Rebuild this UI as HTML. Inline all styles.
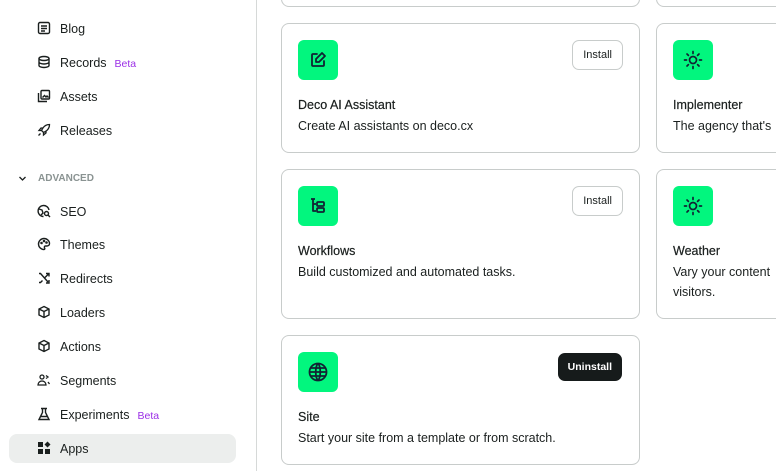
<!DOCTYPE html>
<html><head><style>
*{box-sizing:border-box;margin:0;padding:0}
body{width:776px;height:471px;overflow:hidden;background:#fff;font-family:"Liberation Sans",sans-serif;color:#1a1f1e;position:relative}
.side{position:absolute;left:0;top:0;width:257px;height:471px;border-right:1px solid #d6d9d8}
.item{position:absolute;left:9px;width:227px;height:29px;display:flex;align-items:center;font-size:12.5px}
.item svg{position:absolute;left:28px;top:7px}
.item span.t{position:absolute;left:51px}
.beta{color:#9b2fe6;font-size:10.5px;margin-left:8px}
.sel{background:#eceeed;border-radius:8px}
.card{position:absolute;border:1px solid #c8cccb;border-radius:8px;background:#fff}
.ic{position:absolute;left:16px;top:16px;width:40px;height:40px;border-radius:6px;background:#02f67e;display:flex;align-items:center;justify-content:center}
.ttl{position:absolute;left:16px;top:74px;font-size:12.5px;white-space:nowrap;-webkit-text-stroke:0.2px #1a1f1e}
.desc{position:absolute;left:16px;top:92px;font-size:12.5px;line-height:20px;white-space:nowrap}
.btn{position:absolute;right:16px;top:16px;height:30px;padding:0 10px;border:1px solid #c8cccb;border-radius:7px;font-size:11px;display:flex;align-items:center}
.btn.dark{background:#161b1b;color:#fff;border-color:#161b1b;font-weight:bold;height:28px;top:17px;right:17px;padding:0 9px;font-size:10.5px}
</style></head><body>
<div class="side">
<div class="item" style="top:14px"><svg width="14" height="14" viewBox="0 0 14 14" fill="none" stroke="#1a1f1e" stroke-width="1.4"><rect x="1.5" y="1.5" width="11" height="11" rx="1.5"/><path d="M4 5h6M4 7.5h6M4 10h4"/></svg><span class="t">Blog</span></div>
<div class="item" style="top:48px"><svg width="14" height="14" viewBox="0 0 14 14" fill="none" stroke="#1a1f1e" stroke-width="1.4"><ellipse cx="7" cy="3.5" rx="5" ry="2"/><path d="M2 3.5v7c0 1.1 2.2 2 5 2s5-.9 5-2v-7M2 7c0 1.1 2.2 2 5 2s5-.9 5-2"/></svg><span class="t">Records<span class="beta">Beta</span></span></div>
<div class="item" style="top:82px"><svg width="14" height="14" viewBox="0 0 14 14" fill="none" stroke="#1a1f1e" stroke-width="1.4"><rect x="4" y="1.5" width="8.5" height="8.5" rx="1"/><path d="M1.5 4v8.5H10M5.5 8.5l2-2 1.5 1.5 1-1 1.5 1.5"/></svg><span class="t">Assets</span></div>
<div class="item" style="top:116px"><svg width="14" height="14" viewBox="0 0 14 14" fill="none" stroke="#1a1f1e" stroke-width="1.3"><path d="M12.5 1.5c-4 0-6.5 2.5-8 6l2 2c3.5-1.5 6-4 6-8zM4.5 7.5H2l2-2.5h2.5M6.5 9.5V12l2.5-2V7.5M3.5 10.5l-2 2"/></svg><span class="t">Releases</span></div>
<div style="position:absolute;left:18px;top:173px;font-size:10px;color:#8a9392;font-weight:bold"><svg width="9" height="9" viewBox="0 0 9 9" fill="none" stroke="#1a1f1e" stroke-width="1.3" style="vertical-align:middle"><path d="M1.5 3l3 3 3-3"/></svg><span style="margin-left:11px">ADVANCED</span></div>
<div class="item" style="top:197px"><svg width="14" height="14" viewBox="0 0 14 14" fill="none" stroke="#1a1f1e" stroke-width="1.4"><path d="M12 6A5.5 5.5 0 1 0 6.5 12.5"/><path d="M2 5l3 1 1 3-2 2"/><circle cx="9.5" cy="9.5" r="2"/><path d="M11 11l2 2"/></svg><span class="t">SEO</span></div>
<div class="item" style="top:230px"><svg width="14" height="14" viewBox="0 0 14 14" fill="none" stroke="#1a1f1e" stroke-width="1.4"><path d="M7 1.5a5.5 5.5 0 0 0 0 11c1 0 1-1 .5-1.8-.5-.8 0-1.700 1-1.700h1.5c1.5 0 2.5-1 2.5-2.5 0-2.7-2.5-5-5.5-5z"/><circle cx="4.5" cy="6" r=".6"/><circle cx="7" cy="4" r=".6"/><circle cx="9.5" cy="5.5" r=".6"/></svg><span class="t">Themes</span></div>
<div class="item" style="top:264px"><svg width="14" height="14" viewBox="0 0 14 14" fill="none" stroke="#1a1f1e" stroke-width="1.4"><path d="M2 2.5h1.5L11 11M9 2.5h3v3M12 2.5L8 6.5M2 11.5h1.5l2-2M9 12h3V9"/></svg><span class="t">Redirects</span></div>
<div class="item" style="top:298px"><svg width="14" height="14" viewBox="0 0 14 14" fill="none" stroke="#1a1f1e" stroke-width="1.4"><path d="M7 1.5l5 2.5v6l-5 2.5-5-2.5V4zM2 4l5 2.5L12 4M7 6.5v6"/></svg><span class="t">Loaders</span></div>
<div class="item" style="top:332px"><svg width="14" height="14" viewBox="0 0 14 14" fill="none" stroke="#1a1f1e" stroke-width="1.4"><path d="M7 1.5l5 2.5v6l-5 2.5-5-2.5V4zM2 4l5 2.5L12 4M7 6.5v6"/></svg><span class="t">Actions</span></div>
<div class="item" style="top:366px"><svg width="14" height="14" viewBox="0 0 14 14" fill="none" stroke="#1a1f1e" stroke-width="1.3"><circle cx="5" cy="4" r="2"/><path d="M1 12c0-2.5 2-4 4-4s4 1.5 4 4zM9 2.5l2 1.5-2 1.5M11 9l1.5 2"/></svg><span class="t">Segments</span></div>
<div class="item" style="top:400px"><svg width="14" height="14" viewBox="0 0 14 14" fill="none" stroke="#1a1f1e" stroke-width="1.4"><path d="M4 1.5h6M5.5 1.5v4L2 12.5h10L8.5 5.5v-4M3.5 9.5h7"/></svg><span class="t">Experiments<span class="beta">Beta</span></span></div>
<div class="item sel" style="top:434px"><svg width="14" height="14" viewBox="0 0 14 14" fill="#1a1f1e"><rect x="1" y="1" width="5" height="5"/><rect x="1" y="8" width="5" height="5"/><rect x="8" y="8" width="5" height="5"/><path d="M10.5 0.5l3 3-3 3-3-3z"/></svg><span class="t">Apps</span></div>
</div>

<div class="card" style="left:281px;top:-20px;width:359px;height:27px"></div>
<div class="card" style="left:656px;top:-20px;width:140px;height:27px"></div>

<div class="card" style="left:281px;top:23px;width:359px;height:130px">
<div class="ic"><svg width="20" height="20" viewBox="0 0 20 20" fill="none" stroke="#123" stroke-width="1.8" stroke-linecap="round" stroke-linejoin="round"><path d="M9 4H5a1 1 0 0 0-1 1v10a1 1 0 0 0 1 1h10a1 1 0 0 0 1-1v-4"/><path d="M14 3l3 3-6 6H8V9z"/></svg></div>
<div class="btn">Install</div><div class="ttl">Deco AI Assistant</div><div class="desc">Create AI assistants on deco.cx</div></div>

<div class="card" style="left:656px;top:23px;width:140px;height:130px">
<div class="ic"><svg width="22" height="22" viewBox="0 0 22 22" fill="none" stroke="#123" stroke-width="1.7" stroke-linecap="round"><circle cx="11" cy="11" r="3.5"/><path d="M11 2.5v2M11 17.5v2M2.5 11h2M17.5 11h2M5 5l1.4 1.4M15.6 15.6L17 17M5 17l1.4-1.4M15.6 6.4L17 5"/></svg></div>
<div class="ttl">Implementer</div><div class="desc">The agency that's</div></div>

<div class="card" style="left:281px;top:169px;width:359px;height:150px">
<div class="ic"><svg width="20" height="20" viewBox="0 0 20 20" fill="none" stroke="#123" stroke-width="1.8" stroke-linejoin="round"><path d="M3 3h4M5 3v12h3M5 8h3"/><rect x="9" y="6" width="7" height="4" rx="1"/><rect x="9" y="12" width="7" height="4" rx="1"/></svg></div>
<div class="btn">Install</div><div class="ttl">Workflows</div><div class="desc">Build customized and automated tasks.</div></div>

<div class="card" style="left:656px;top:169px;width:140px;height:150px">
<div class="ic"><svg width="22" height="22" viewBox="0 0 22 22" fill="none" stroke="#123" stroke-width="1.7" stroke-linecap="round"><circle cx="11" cy="11" r="3.5"/><path d="M11 2.5v2M11 17.5v2M2.5 11h2M17.5 11h2M5 5l1.4 1.4M15.6 15.6L17 17M5 17l1.4-1.4M15.6 6.4L17 5"/></svg></div>
<div class="ttl">Weather</div><div class="desc">Vary your content<br>visitors.</div></div>

<div class="card" style="left:281px;top:335px;width:359px;height:130px">
<div class="ic"><svg width="22" height="22" viewBox="0 0 22 22" fill="none" stroke="#123" stroke-width="1.8"><circle cx="11" cy="11" r="8.5"/><path d="M2.5 11h17M3.5 7h15M3.5 15h15M11 2.5c-3 3-3 14 0 17M11 2.5c3 3 3 14 0 17"/></svg></div>
<div class="btn dark">Uninstall</div><div class="ttl">Site</div><div class="desc">Start your site from a template or from scratch.</div></div>
</body></html>
